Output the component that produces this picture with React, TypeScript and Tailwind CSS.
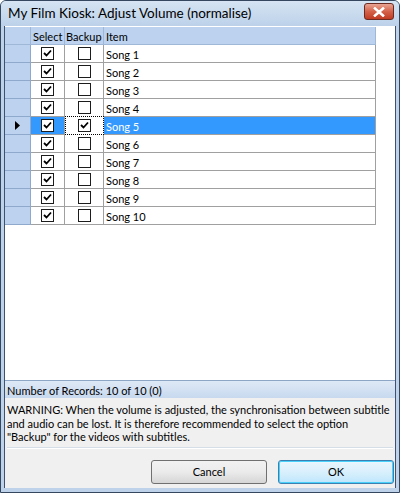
import React from 'react';

const songs = Array.from({ length: 10 }, (_, i) => ({
  name: `Song ${i + 1}`,
  select: true,
  backup: i === 4,
}));

const Check: React.FC<{ checked: boolean }> = ({ checked }) => (
  <div className="w-[13px] h-[13px] border border-[#1c1c1c] bg-white flex items-center justify-center">
    {checked && (
      <svg width="9" height="9" viewBox="0 0 9 9">
        <path d="M1 4 L3.5 6.5 L8 1.5" stroke="#000" strokeWidth="1.8" fill="none" />
      </svg>
    )}
  </div>
);

export default function App() {
  return (
    <div
      className="w-[400px] h-[493px] bg-[#bed3ea] border border-[#34475f] rounded-t-[6px] flex flex-col overflow-hidden"
      style={{ fontFamily: 'Lato, "Noto Sans", sans-serif' }}
    >
      {/* Title bar */}
      <div className="h-[25px] shrink-0 flex items-center justify-between pl-[7px] pr-[5px] bg-gradient-to-b from-[#d6e4f3] to-[#bcd1e9]">
        <span className="text-[13.5px] text-black leading-none mt-[1px]">My Film Kiosk: Adjust Volume (normalise)</span>
        <div className="w-[30px] h-[17px] -mt-[4px] rounded-[3px] border border-[#6b2a22] bg-gradient-to-b from-[#e8a493] via-[#d4614a] to-[#c03a20] flex items-center justify-center">
          <svg width="12" height="10" viewBox="0 0 12 10">
            <path d="M2 1.5 L10 8.5 M10 1.5 L2 8.5" stroke="#fff" strokeWidth="2.6" strokeLinecap="square" />
          </svg>
        </div>
      </div>

      {/* Content */}
      <div className="flex-1 flex flex-col mx-[3px] border-x border-[#3e5170] bg-[#f0f0f0] text-[11px]">
        {/* Grid */}
        <div className="h-[354px] bg-white flex flex-col pt-[1px]">
          <div className="flex h-[18px] leading-none">
            <div className="w-[26px] bg-[#bcd2ee] border-r border-b border-[#9fb8d8]" />
            <div className="w-[34px] bg-[#bcd2ee] border-r border-b border-[#9fb8d8] flex items-center pl-[2px] pt-[1px]">Select</div>
            <div className="w-[39px] bg-[#bcd2ee] border-r border-b border-[#9fb8d8] flex items-center pl-[1px] pt-[1px]">Backup</div>
            <div className="w-[272px] bg-[#bcd2ee] border-r border-b border-[#9fb8d8] flex items-center pl-[2px] pt-[1px]">Item</div>
          </div>
          {songs.map((s, i) => {
            const sel = i === 4;
            return (
              <div key={s.name} className="flex h-[18px] leading-none">
                <div className="w-[26px] bg-[#bcd2ee] border-r border-b border-[#8fa9cc] flex items-center justify-center">
                  {sel && (
                    <svg width="5" height="9" viewBox="0 0 5 9">
                      <path d="M0 0 L5 4.5 L0 9 Z" fill="#000" />
                    </svg>
                  )}
                </div>
                <div className={`w-[34px] border-r border-b border-[#a0a0a0] flex items-center justify-center ${sel ? 'bg-[#3399ff]' : 'bg-white'}`}>
                  <Check checked={s.select} />
                </div>
                <div className={`w-[39px] border-b border-r flex items-center justify-center bg-white ${sel ? 'border border-dotted border-[#000] -mt-[1px] h-[19px]' : 'border-[#a0a0a0]'}`}>
                  <Check checked={s.backup} />
                </div>
                <div className={`w-[272px] border-r border-b border-[#a0a0a0] flex items-center pl-[2px] pt-[2px] ${sel ? 'bg-[#3399ff] text-white' : 'bg-white text-black'}`}>
                  {s.name}
                </div>
              </div>
            );
          })}
        </div>

        {/* Status bar */}
        <div className="h-[18px] flex items-center pl-[2px] pt-[1px] leading-none border-t border-[#8ea6c6] bg-gradient-to-b from-[#dfe9f6] to-[#c7d9ef]">
          Number of Records: 10 of 10 (0)
        </div>

        {/* Warning */}
        <div className="px-[2px] pt-[5px] leading-[13.5px] text-black h-[49px] whitespace-nowrap">
          WARNING: When the volume is adjusted, the synchronisation between subtitle
          <br />
          and audio can be lost. It is therefore recommended to select the option
          <br />
          "Backup" for the videos with subtitles.
        </div>

        <div className="mx-[2px] border-t border-[#d5dde6] border-b border-b-white" />

        {/* Buttons */}
        <div className="flex justify-end gap-[11px] pt-[11px] pr-[1px]">
          <button className="w-[116px] h-[24px] rounded-[3px] border border-[#707070] bg-gradient-to-b from-[#f2f2f2] via-[#ebebeb] to-[#d6d6d6] text-black">
            Cancel
          </button>
          <button className="w-[116px] h-[24px] rounded-[3px] border border-[#3c7fb1] bg-gradient-to-b from-[#eaf6fd] via-[#d9f0fc] to-[#bee6fd] text-black shadow-[inset_0_0_0_1px_#48d2fb]">
            OK
          </button>
        </div>
      </div>
      <div className="h-[4px] shrink-0" />
    </div>
  );
}
